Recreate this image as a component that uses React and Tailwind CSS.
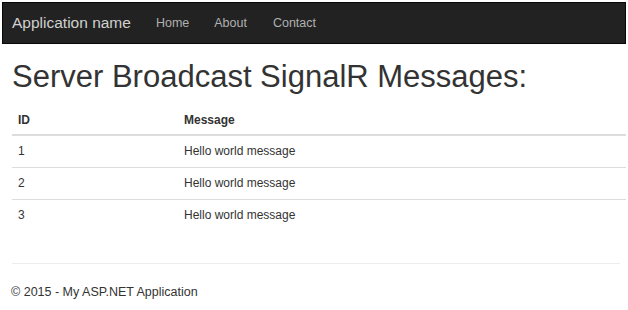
export default function App() {
  const rows = [1, 2, 3];
  return (
    <div className="w-[628px] h-[310px] bg-white text-[#333] overflow-hidden" style={{ fontFamily: '"Liberation Sans", Arial, sans-serif' }}>
      <div className="pt-[2px] pl-[2px] pr-[2px]">
        <nav className="h-[42px] bg-[#222] border border-[#080808] flex items-center pl-[9px]">
          <span className="text-[15.5px] text-[#d0d0d0] mr-[25px]">Application name</span>
          <span className="text-[12.5px] text-[#b0b0b0] mr-[25px]">Home</span>
          <span className="text-[12.5px] text-[#b0b0b0] mr-[26px]">About</span>
          <span className="text-[12.5px] text-[#b0b0b0]">Contact</span>
        </nav>
      </div>
      <div className="pl-[12px]">
        <h1 className="text-[31px] leading-[34px] mt-[16px] mb-[11px] text-[#333]">Server Broadcast SignalR Messages:</h1>
        <table className="w-[614px] text-[12px] border-collapse">
          <thead>
            <tr className="border-b-2 border-[#ddd]">
              <th className="text-left font-bold w-[166px] px-[6px] h-[30px]">ID</th>
              <th className="text-left font-bold px-[6px]">Message</th>
            </tr>
          </thead>
          <tbody>
            {rows.map((r, i) => (
              <tr key={r} className={i < 2 ? "border-b border-[#ddd]" : ""}>
                <td className="px-[6px] h-[32px]">{r}</td>
                <td className="px-[6px]">Hello world message</td>
              </tr>
            ))}
          </tbody>
        </table>
        <div className="mt-[32px] border-t border-[#eee] w-[608px]"></div>
        <div className="text-[12.5px] mt-[19px] -ml-[1px]">© 2015 - My ASP.NET Application</div>
      </div>
    </div>
  );
}
